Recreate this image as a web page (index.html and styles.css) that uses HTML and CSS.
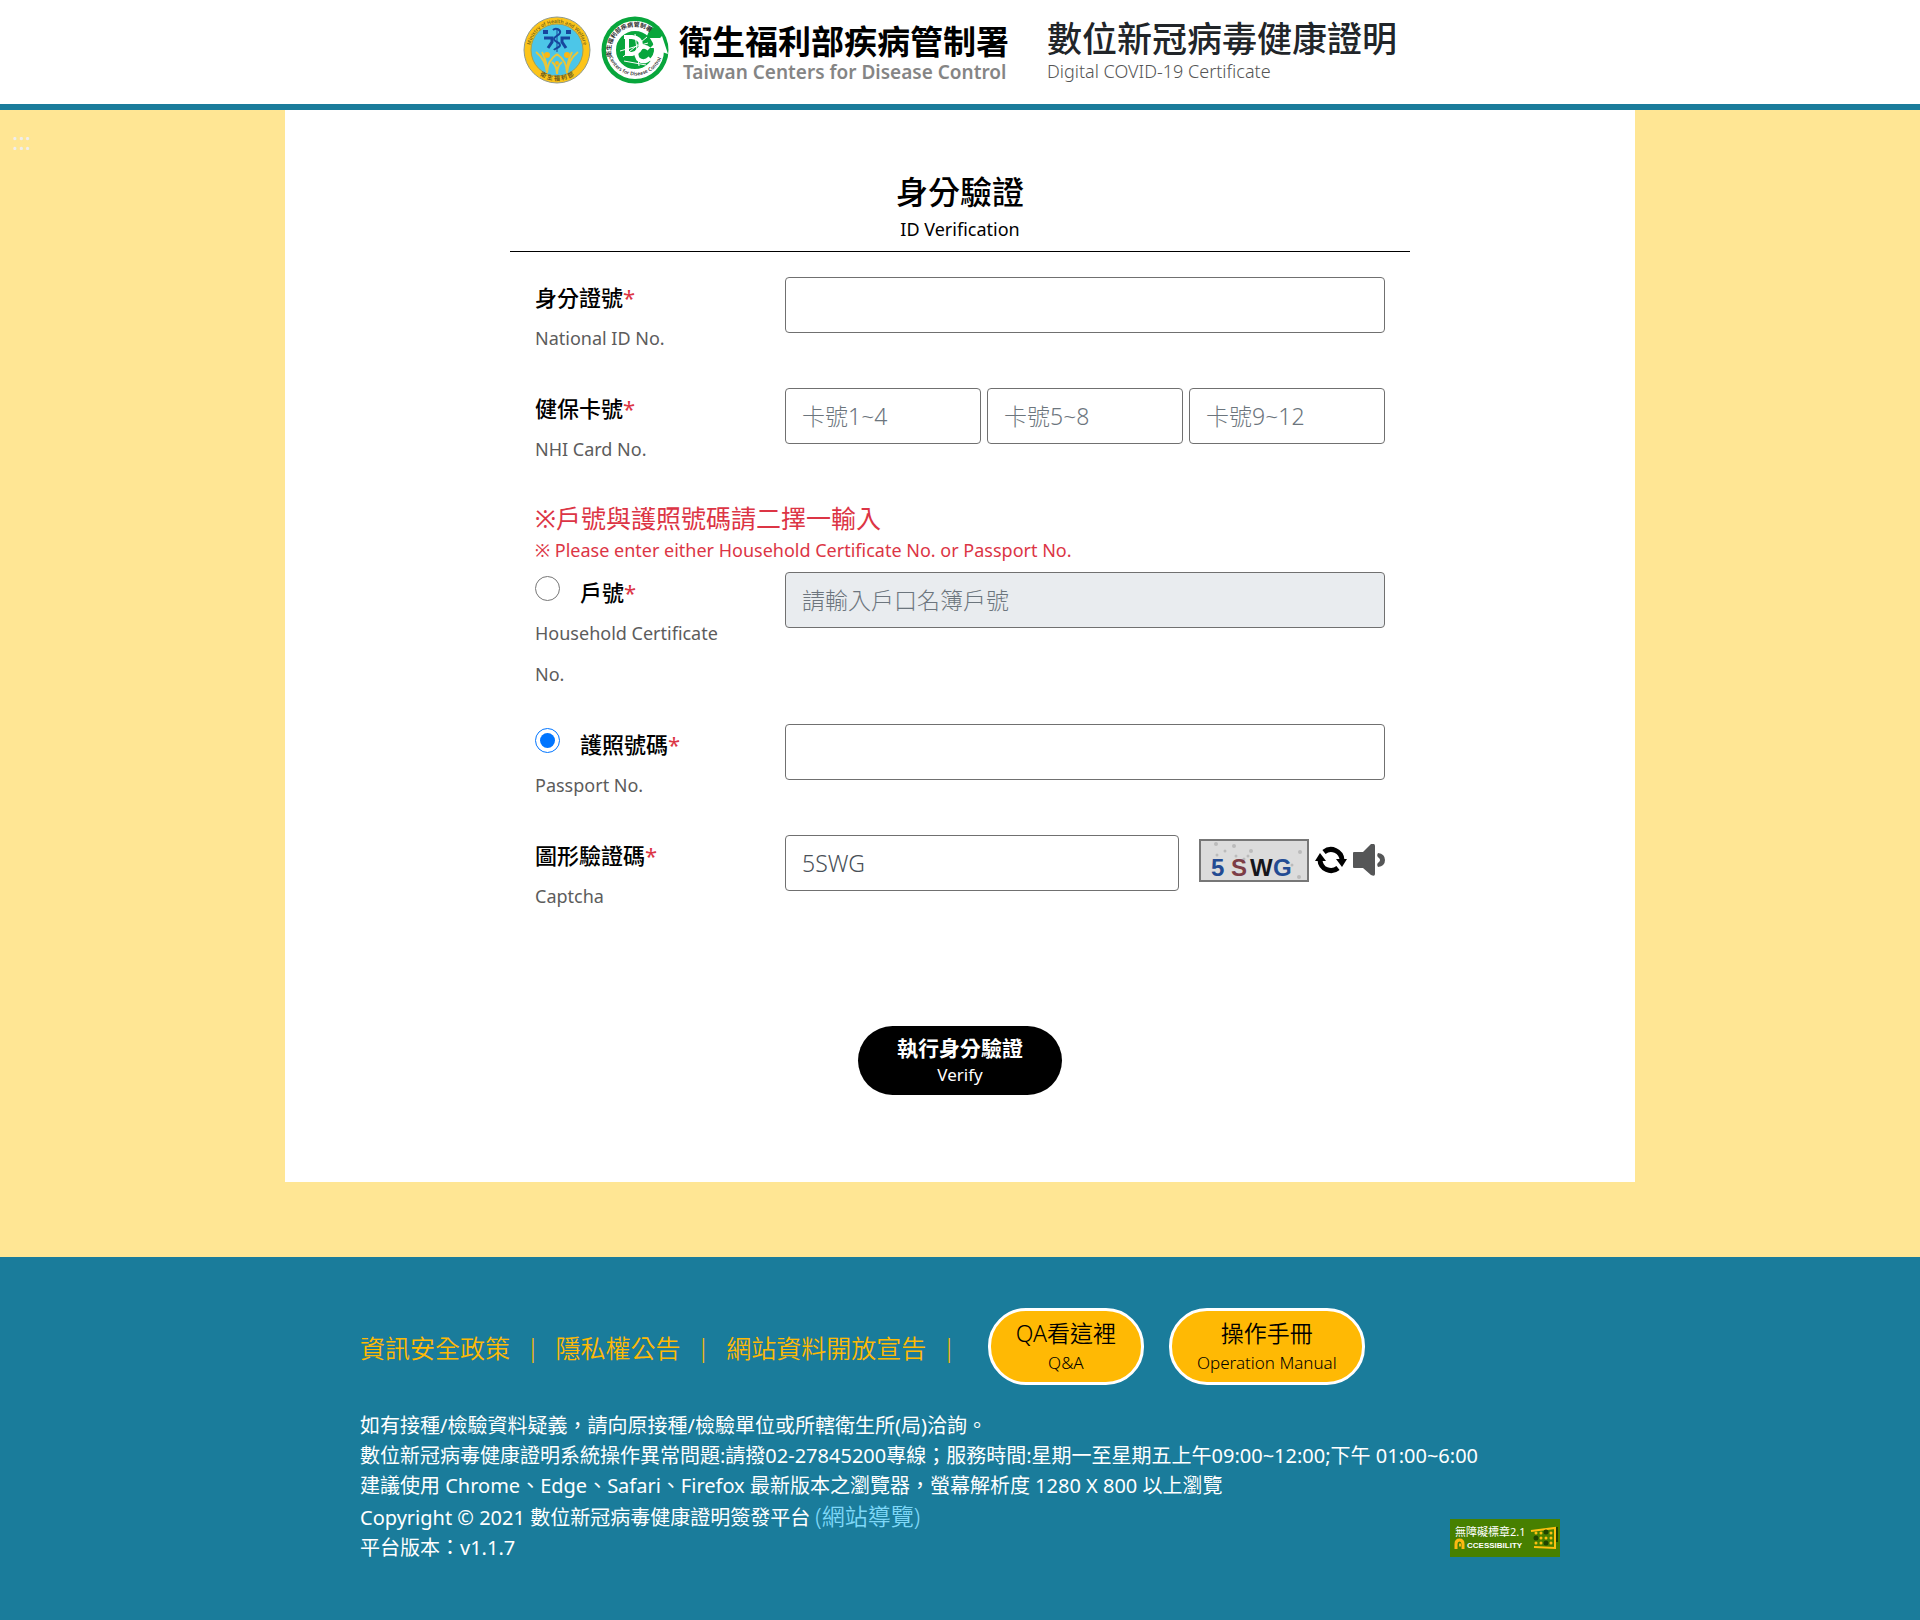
FILE: index.html
```html
<!DOCTYPE html>
<html lang="zh-Hant">
<head>
    <meta charset="UTF-8">
    <meta name="viewport" content="width=device-width, initial-scale=1.0">
    <title>數位新冠病毒健康證明</title>
    <link rel="stylesheet" href="styles.css">
</head>
<body>
    <header class="header">
        <div class="logo">
            <svg class="emblem" viewBox="0 0 68 68" aria-hidden="true">
                <defs>
                    <path id="mohw-top" d="M7 34a27 27 0 0 1 54 0"/>
                    <path id="mohw-bottom" d="M3.5 34a30.5 30.5 0 0 0 61 0"/>
                </defs>
                <circle cx="34" cy="34" r="33" fill="#fcc419" stroke="#8f9a8c"/>
                <circle cx="34" cy="34" r="26" fill="#4cc6e8" stroke="#a8a04a"/>
                <text class="ring-en"><textPath href="#mohw-top" startOffset="50%" text-anchor="middle">Ministry of Health and Welfare</textPath></text>
                <text class="ring-zh"><textPath href="#mohw-bottom" startOffset="50%" text-anchor="middle">衛 生 福 利 部</textPath></text>
                <g fill="none" stroke="#17469e" stroke-width="3">
                    <path d="M20 16h5M43 16h5" stroke-width="4"/>
                    <path d="M21 22h8v4l-4 6M47 22h-8v4l4 6"/>
                    <path d="M30 14c3-3 8 0 7 3s-6 3-6 6 6 3 6 6-5 3-6 5" stroke-width="2"/>
                    <path d="M34 12v24" stroke-width="1"/>
                </g>
                <g fill="none" stroke="#e9c63b" stroke-width="2">
                    <path d="M13 36q10 8 11 21M24 57q0-12 10-19M55 36q-10 8-11 21M44 57q0-12-10-19M19 36q5 10 5 20M49 36q-5 10-5 20M29 46q5 4 5 12M39 46q-5 4-5 12"/>
                </g>
                <g fill="#fcb814">
                    <circle cx="24" cy="39" r="3"/>
                    <circle cx="44" cy="39" r="3"/>
                    <circle cx="34" cy="47" r="2"/>
                </g>
            </svg>
            <svg class="emblem" viewBox="0 0 68 68" aria-hidden="true">
                <defs>
                    <path id="cdc-top" d="M11 42a24 24 0 0 1 41-23"/>
                    <path id="cdc-bottom" d="M8 41a28 28 0 0 0 53-1"/>
                </defs>
                <circle cx="34" cy="34" r="33.500" fill="#08a63c"/>
                <circle cx="34" cy="34" r="24" fill="none" stroke="#fff" stroke-width="10"/>
                <path d="M50 11l-5 11h17l-4-9z" fill="#08a63c"/>
                <path d="M49 32l12-12 6 18-6-2q-2 8-7 12l-6-4q5-5 6-12z" fill="#fff"/>
                <text class="ring-zh dark"><textPath href="#cdc-top" startOffset="2%">衛生福利部疾病管制署</textPath></text>
                <text class="ring-en dark"><textPath href="#cdc-bottom">Centers for Disease Control</textPath></text>
                <g fill="none" stroke="#fff">
                    <path d="M26 21v17h5q9-2 9-9t-9-8h-8" stroke-width="4"/>
                    <path d="M48 33q-4-4-9-1-6 5-2 11 6 5 12-1" stroke-width="4"/>
                    <path d="M22 41l24-20M23 45l22 4M34 18l4 32M19 35l28-8" stroke-width="1"/>
                </g>
            </svg>
            <div class="logo-text">
                <div class="logo-zh">衛生福利部疾病管制署</div>
                <div class="logo-en">Taiwan Centers for Disease Control</div>
            </div>
        </div>
        <div class="site-title">
            <h1>數位新冠病毒健康證明</h1>
            <p>Digital COVID-19 Certificate</p>
        </div>
    </header>

    <main class="page">
        <a class="anchor" href="#content" title="主要內容區">:::</a>
        <div class="content" id="content">
            <form class="verify">
                <div class="verify-title">
                    <h2>身分驗證</h2>
                    <p>ID Verification</p>
                </div>

                <div class="row">
                    <label for="idno">身分證號<span class="star">*</span><small>National ID No.</small></label>
                    <input class="field" type="text" id="idno">
                </div>

                <div class="row">
                    <label for="card1">健保卡號<span class="star">*</span><small>NHI Card No.</small></label>
                    <div class="cards">
                        <input class="field" type="text" id="card1" placeholder="卡號1~4">
                        <input class="field" type="text" id="card2" placeholder="卡號5~8" aria-label="卡號5~8">
                        <input class="field" type="text" id="card3" placeholder="卡號9~12" aria-label="卡號9~12">
                    </div>
                </div>

                <div class="notice">
                    <p class="notice-zh">※戶號與護照號碼請二擇一輸入</p>
                    <p class="notice-en">※ Please enter either Household Certificate No. or Passport No.</p>
                </div>

                <div class="row">
                    <div class="choice">
                        <input type="radio" name="kind" id="kind1">
                        <label for="kind1">戶號<span class="star">*</span></label>
                        <small>Household Certificate No.</small>
                    </div>
                    <input class="field" type="text" placeholder="請輸入戶口名簿戶號" aria-label="戶號" disabled>
                </div>

                <div class="row">
                    <div class="choice">
                        <input type="radio" name="kind" id="kind2" checked>
                        <label for="kind2">護照號碼<span class="star">*</span></label>
                        <small>Passport No.</small>
                    </div>
                    <input class="field" type="text" aria-label="護照號碼">
                </div>

                <div class="row">
                    <label for="captcha">圖形驗證碼<span class="star">*</span><small>Captcha</small></label>
                    <div class="captcha">
                        <input class="field" type="text" id="captcha" value="5SWG">
                        <div class="captcha-tools">
                            <svg class="captcha-img" viewBox="0 0 110 43" role="img" aria-label="圖形驗證碼">
                                <rect x="1" y="1" width="108" height="41" fill="#dcdcdc" stroke="#777" stroke-width="2"/>
                                <g fill="#bbb">
                                    <circle cx="17" cy="5" r="2"/><circle cx="26" cy="12" r="1.500"/><circle cx="35" cy="7" r="2"/>
                                    <circle cx="18" cy="16" r="1.500"/><circle cx="37" cy="17" r="1.500"/><circle cx="45" cy="20" r="1.500"/>
                                    <circle cx="52" cy="12" r="2"/><circle cx="49" cy="17" r="1.500"/><circle cx="101" cy="13" r="2"/>
                                    <circle cx="100" cy="38" r="2"/><circle cx="93" cy="26" r="1.500"/>
                                </g>
                                <g class="captcha-text">
                                    <text x="12" y="37" fill="#234b93">5</text>
                                    <text x="32" y="37" fill="#7d3d46">S</text>
                                    <text x="51" y="37" fill="#16161c">W</text>
                                    <text x="74" y="37" fill="#234b93">G</text>
                                </g>
                            </svg>
                            <button class="tool" type="button" aria-label="更新驗證碼">
                                <svg viewBox="0 0 32 32">
                                    <g fill="none" stroke="#000" stroke-width="5">
                                        <path d="M9 8a11 11 0 0 1 18 8"/>
                                        <path d="M23 24a11 11 0 0 1-18-8"/>
                                    </g>
                                    <path d="M21 15h11l-5 8zM0 17l5-8 6 8z"/>
                                </svg>
                            </button>
                            <button class="tool" type="button" aria-label="語音播放">
                                <svg viewBox="0 0 32 32" fill="#555657">
                                    <path d="M1 8h9l8-8q4-1 4 2v28q0 3-4 1l-8-7H1q-1 0-1-1V9q0-1 1-1z"/>
                                    <path d="M25 9q7 1 7 7t-7 7q-2-3 1-5 2-2 0-4-3-2-1-5z"/>
                                </svg>
                            </button>
                        </div>
                    </div>
                </div>

                <button class="submit" type="submit">
                    <strong>執行身分驗證</strong>
                    <span>Verify</span>
                </button>
            </form>
        </div>
    </main>

    <footer class="footer">
        <div class="footer-inner">
            <nav class="footer-nav">
                <a href="#">資訊安全政策</a>
                <span>|</span>
                <a href="#">隱私權公告</a>
                <span>|</span>
                <a href="#">網站資料開放宣告</a>
                <span>|</span>
                <div class="pills">
                    <a class="pill" href="#">QA看這裡<small>Q&amp;A</small></a>
                    <a class="pill" href="#">操作手冊<small>Operation Manual</small></a>
                </div>
            </nav>
            <div class="footer-bottom">
                <div class="info">
                    <p>如有接種/檢驗資料疑義，請向原接種/檢驗單位或所轄衛生所(局)洽詢。</p>
                    <p>數位新冠病毒健康證明系統操作異常問題:請撥02-27845200專線；服務時間:星期一至星期五上午09:00~12:00;下午 01:00~6:00</p>
                    <p>建議使用 Chrome、Edge、Safari、Firefox 最新版本之瀏覽器，螢幕解析度 1280 X 800 以上瀏覽</p>
                    <p>Copyright © 2021 數位新冠病毒健康證明簽發平台 <a href="#">(網站導覽)</a></p>
                    <p>平台版本：v1.1.7</p>
                </div>
                <a class="badge" href="#" aria-label="無障礙標章">
                    <svg viewBox="0 0 110 38">
                        <rect width="110" height="38" fill="#478000"/>
                        <text class="badge-zh" x="5" y="17">無障礙標章2.1</text>
                        <text class="badge-en" x="17" y="29">CCESSIBILITY</text>
                        <path d="M6 30v-5q0-4 3.500-4t3.500 4v5M9 26h2" fill="none" stroke="#fdb913" stroke-width="3"/>
                        <path d="M81 12l24-3v20l-21-1" fill="none" stroke="#fdc010" stroke-width="2"/>
                        <path d="M107 8v15" stroke="#1f4400" stroke-width="2"/>
                        <g fill="#1f4400">
                            <circle cx="96" cy="13" r="2.500"/><circle cx="86" cy="19" r="2.500"/><circle cx="96" cy="24" r="2.500"/>
                        </g>
                        <g fill="#fdc010">
                            <circle cx="86" cy="14" r="1.500"/><circle cx="91" cy="14" r="1.500"/><circle cx="101" cy="14" r="1.500"/>
                            <circle cx="91" cy="19" r="1.500"/><circle cx="96" cy="19" r="1.500"/><circle cx="101" cy="19" r="1.500"/>
                            <circle cx="86" cy="24" r="1.500"/><circle cx="91" cy="24" r="1.500"/><circle cx="101" cy="24" r="1.500"/>
                        </g>
                    </svg>
                </a>
            </div>
        </div>
    </footer>
</body>
</html>
```

FILE: styles.css
```css
*{
    margin: 0;
    padding: 0;
    box-sizing: border-box;
}

body{
    font-family: "Noto Sans", "Noto Sans CJK TC", sans-serif;
    font-size: 20px;
    color: #000;
    background-color: #ffe694;
    min-height: 100vh;
    display: flex;
    flex-direction: column;
}

a{
    text-decoration: none;
}

small{
    display: block;
}

/* header */
.header{
    display: flex;
    justify-content: center;
    gap: 38px;
    padding: 16px 20px 20px;
    background-color: #fff;
    border-bottom: 6px solid #1a7c9b;
}

.logo{
    display: flex;
    gap: 10px;
}

.emblem{
    width: 68px;
    height: 68px;
}

.ring-en{
    font-size: 5px;
    font-weight: 600;
    fill: #7a6a1c;
}

.ring-zh{
    font-size: 6px;
    font-weight: 700;
    fill: #6b5a1c;
}

.ring-en.dark,
.ring-zh.dark{
    fill: #333;
}

.logo-text{
    padding-top: 4px;
}

.logo-zh{
    font-family: "Noto Sans CJK TC", sans-serif;
    font-size: 33px;
    font-weight: 700;
    line-height: 40px;
}

.logo-en{
    padding-left: 4px;
    font-size: 19px;
    font-weight: 600;
    line-height: 24px;
    color: #858585;
}

.site-title h1{
    font-size: 35px;
    font-weight: 500;
    line-height: 46px;
    color: #212529;
}

.site-title p{
    font-size: 18px;
    font-weight: 300;
    line-height: 18px;
    color: #555;
}

/* main */
.page{
    display: grid;
    grid-template-columns: 1fr minmax(0, 1350px) 1fr;
    padding-bottom: 75px;
}

.anchor{
    padding: 14px 12px;
    font-size: 24px;
    color: #eee;
}

.content{
    padding: 60px 20px 87px;
    background-color: #fff;
}

.verify{
    max-width: 900px;
    margin: 0 auto;
}

.verify-title{
    margin-bottom: 25px;
    padding-bottom: 7px;
    text-align: center;
    border-bottom: 1px solid #000;
}

.verify-title h2{
    font-size: 32px;
    font-weight: 500;
    line-height: 44px;
}

.verify-title p{
    font-size: 18px;
    line-height: 30px;
}

.row{
    display: grid;
    grid-template-columns: 1fr 600px;
    gap: 50px;
    align-items: start;
    margin-bottom: 29px;
    padding: 0 25px;
}

.row label{
    font-size: 22px;
    font-weight: 500;
    line-height: 41px;
}

.row small{
    font-size: 18px;
    font-weight: 400;
    line-height: 41px;
    color: #5c5c5c;
}

.star{
    color: #dc3545;
    font-weight: 400;
}

.field{
    width: 100%;
    height: 56px;
    padding: 0 16px;
    font-family: inherit;
    font-size: 23px;
    font-weight: 300;
    color: #495057;
    background-color: #fff;
    border: 1px solid #707070;
    border-radius: 4px;
}

.field::placeholder{
    color: #6c757d;
}

.field:disabled{
    background-color: #e9ecef;
}

.cards{
    display: flex;
    gap: 6px;
}

.notice{
    padding: 0 25px 10px;
    color: #dc3545;
}

.notice-zh{
    font-size: 25px;
    line-height: 39px;
}

.notice-en{
    font-size: 18px;
    line-height: 24px;
}

.choice{
    display: flex;
    flex-wrap: wrap;
    align-items: flex-start;
    column-gap: 20px;
}

.choice input{
    width: 25px;
    height: 25px;
    margin-top: 4px;
}

.choice small{
    width: 100%;
}

.captcha{
    display: flex;
    gap: 20px;
}

.captcha .field{
    flex: 1;
    min-width: 0;
}

.captcha-tools{
    display: flex;
    align-items: center;
    gap: 6px;
    height: 50px;
}

.captcha-img{
    width: 110px;
    height: 43px;
}

.captcha-text{
    font-family: "Liberation Sans", Arial, sans-serif;
    font-size: 24px;
    font-weight: 700;
}

.tool{
    width: 32px;
    height: 32px;
    background: none;
    border: 0;
}

.tool svg{
    display: block;
}

.submit{
    display: block;
    margin: 109px auto 0;
    padding: 8px 39px;
    font-family: inherit;
    color: #fff;
    background-color: #000;
    border: 0;
    border-radius: 35px;
}

.submit strong,
.submit span{
    display: block;
    font-size: 21px;
    line-height: 28px;
}

.submit span{
    font-size: 17px;
    line-height: 25px;
}

/* footer */
.footer{
    flex: 1;
    padding: 51px 20px 56px;
    color: #fff;
    background-color: #1a7c9b;
}

.footer-inner{
    max-width: 1200px;
    margin: 0 auto;
}

.footer-nav{
    display: flex;
    align-items: center;
    gap: 16px;
    margin-bottom: 26px;
    font-size: 25px;
    font-weight: 350;
    color: #ffb904;
}

.footer-nav a{
    color: #ffb904;
}

.pills{
    display: flex;
    gap: 25px;
    margin-left: 16px;
}

.footer-nav .pill{
    padding: 5px 25px 6px;
    font-size: 23px;
    line-height: 34px;
    text-align: center;
    color: #000;
    background-color: #ffb904;
    border: 3px solid #fff;
    border-radius: 38px;
}

.pill small{
    font-size: 17px;
    line-height: 26px;
}

.footer-bottom{
    display: flex;
    justify-content: space-between;
    align-items: flex-end;
}

/* the long line runs on above the badge */
.info{
    flex-shrink: 0;
    max-width: 100%;
    margin-right: -110px;
}

.info p{
    line-height: 30px;
}

.info a{
    font-size: 23px;
    font-weight: 350;
    color: #7fd8f8;
}

.badge{
    flex-shrink: 0;
    width: 110px;
    margin-bottom: 6px;
}

.badge svg{
    display: block;
}

.badge-zh{
    font-size: 11px;
    fill: #fff;
}

.badge-en{
    font-family: "Liberation Sans", Arial, sans-serif;
    font-size: 8px;
    font-weight: 700;
    fill: #fff;
}
```
